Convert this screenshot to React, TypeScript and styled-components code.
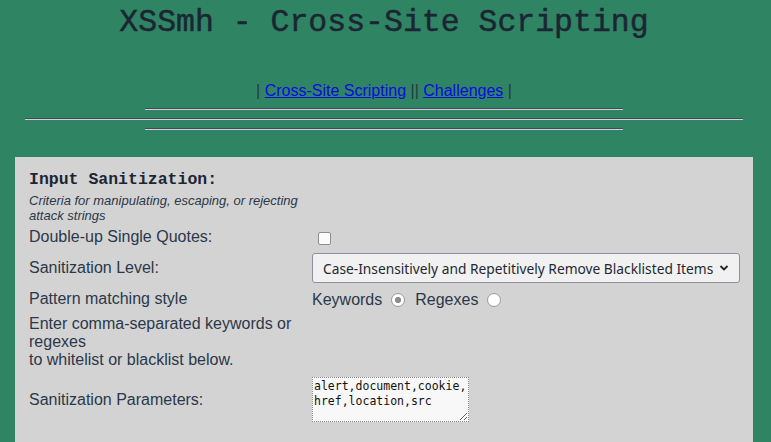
import React from "react";
import styled, { createGlobalStyle } from "styled-components";

const Global = createGlobalStyle`
  html, body { margin: 0; padding: 0; background: #2f8563; }
  body { font-family: "Liberation Sans", Arial, sans-serif; }
  #root { width: 768px; }
`;

const Page = styled.div`
  width: 768px;
  display: flex;
  flex-direction: column;
  align-items: center;
  min-height: 442px;
`;

const Title = styled.h1`
  margin: 5px 0 0;
  font-family: "Liberation Mono", "Courier New", monospace;
  font-weight: normal;
  -webkit-text-stroke: 0.5px #1c2633;
  font-size: 31.5px;
  line-height: 36px;
  color: #1c2633;
  white-space: pre;
`;

const Nav = styled.div`
  margin-top: 41px;
  font-size: 16px;
  line-height: 18px;
  color: #2a3545;
`;

const NavLink = styled.a`
  color: #0a0ae0;
  text-decoration: underline;
`;

const Rule = styled.hr<{ $w: number; $mt: number }>`
  width: ${(p) => p.$w}px;
  margin: ${(p) => p.$mt}px 0 0;
  border: none;
  border-top: 1px solid #3e4a62;
  border-bottom: 1px solid #d2d2d2;
  height: 0;
`;

const Panel = styled.section`
  align-self: stretch;
  margin: 27px 15px 0;
  background: #d3d3d3;
  padding: 14px 14px 20px;
  flex: 1;
  color: #2b3849;
`;

const Heading = styled.div`
  font-family: "Liberation Mono", "Courier New", monospace;
  font-weight: bold;
  font-size: 16.5px;
  line-height: 18px;
  color: #1c2633;
`;

const Sub = styled.div`
  width: 283px;
  margin-top: 4px;
  font-style: italic;
  font-size: 13px;
  line-height: 15px;
  color: #2b3849;
`;

const Row = styled.div<{ $mt: number; $h?: number }>`
  display: grid;
  grid-template-columns: 283px 1fr;
  align-items: center;
  margin-top: ${(p) => p.$mt}px;
  min-height: ${(p) => p.$h ?? 20}px;
`;

const Label = styled.div`
  font-size: 16px;
  line-height: 18px;
  color: #2b3849;
`;

const Cell = styled.div`
  display: flex;
  align-items: center;
`;

const Check = styled.input`
  appearance: none;
  margin: 2px 0 0 6px;
  width: 13px;
  height: 13px;
  border: 1px solid #8e8e8e;
  border-radius: 2px;
  background: #fbfbfb;
`;

const SelectWrap = styled.div`
  position: relative;
  width: 428px;
  height: 30px;
`;

const Select = styled.select`
  appearance: none;
  width: 428px;
  height: 30px;
  margin: 0;
  padding: 0 26px 0 10px;
  border: 1px solid #8c919c;
  border-radius: 3px;
  background: #f1f1f1;
  font-family: "Noto Sans", "DejaVu Sans", sans-serif;
  font-size: 13.75px;
  color: #1f2833;
`;

const Chevron = styled.svg`
  position: absolute;
  right: 11px;
  top: 11px;
  pointer-events: none;
`;

const Radios = styled.div`
  display: flex;
  align-items: center;
  font-size: 16px;
  line-height: 18px;
  color: #2b3849;
  padding-top: 3px;
`;

const Radio = styled.input`
  appearance: none;
  width: 14px;
  height: 14px;
  margin: 0 10px 0 9px;
  border-radius: 50%;
  border: 1px solid #9a9a9a;
  background: #fff;
  &:checked {
    background: radial-gradient(circle, #8d8d8d 0 2.8px, #fff 3.4px);
  }
`;

const Area = styled.textarea`
  width: 157px;
  height: 45px;
  box-sizing: border-box;
  margin: 0;
  padding: 1px 1px 0;
  border: 1px dotted #8a8a8a;
  background: #f8f8f8;
  font-family: "DejaVu Sans Mono", monospace;
  font-size: 11.5px;
  line-height: 15px;
  color: #111;
  resize: both;
`;

export default function App() {
  return (
    <>
      <Global />
      <Page>
        <Title>XSSmh - Cross-Site Scripting</Title>
        <Nav>
          | <NavLink href="#">Cross-Site Scripting</NavLink> ||{" "}
          <NavLink href="#">Challenges</NavLink> |
        </Nav>
        <Rule $w={478} $mt={8} />
        <Rule $w={718} $mt={8} />
        <Rule $w={478} $mt={8} />
        <Panel>
          <Heading>Input Sanitization:</Heading>
          <Sub>Criteria for manipulating, escaping, or rejecting attack strings</Sub>
          <Row $mt={4}>
            <Label>Double-up Single Quotes:</Label>
            <Cell>
              <Check type="checkbox" />
            </Cell>
          </Row>
          <Row $mt={5} $h={32}>
            <Label>Sanitization Level:</Label>
            <SelectWrap>
              <Select defaultValue="b">
                <option value="b">Case-Insensitively and Repetitively Remove Blacklisted Items</option>
              </Select>
              <Chevron width="10" height="8" viewBox="0 0 10 8">
                <path d="M1.5 2 L5 5.5 L8.5 2" fill="none" stroke="#222" strokeWidth="1.8" />
              </Chevron>
            </SelectWrap>
          </Row>
          <Row $mt={4}>
            <Label>Pattern matching style</Label>
            <Radios>
              Keywords
              <Radio type="radio" name="pm" defaultChecked />
              Regexes
              <Radio type="radio" name="pm" />
            </Radios>
          </Row>
          <Row $mt={6}>
            <Label>
              Enter comma-separated keywords or regexes
              <br />
              to whitelist or blacklist below.
            </Label>
            <div />
          </Row>
          <Row $mt={8}>
            <Label>Sanitization Parameters:</Label>
            <Cell>
              <Area defaultValue="alert,document,cookie,href,location,src" />
            </Cell>
          </Row>
        </Panel>
      </Page>
    </>
  );
}
